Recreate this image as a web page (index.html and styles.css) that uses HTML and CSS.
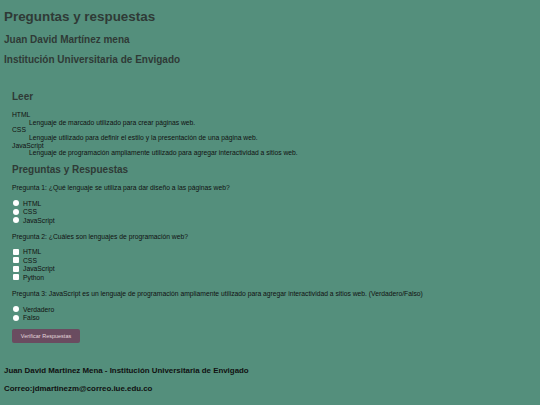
FILE: index.html
```html
<!DOCTYPE html>
<html lang="es">
<head>
<meta charset="utf-8">
<title>Preguntas y respuestas</title>
<link rel="stylesheet" href="styles.css">
</head>
<body>
<header class="top">
  <h1 class="title">Preguntas y respuestas</h1>
  <h2 class="sub">Juan David Martínez mena</h2>
  <h2 class="sub">Institución Universitaria de Envigado</h2>
</header>
<main class="content">
  <section class="read">
    <h3 class="sec">Leer</h3>
    <dl class="defs">
      <dt>HTML</dt>
      <dd>Lenguaje de marcado utilizado para crear páginas web.</dd>
      <dt>CSS</dt>
      <dd>Lenguaje utilizado para definir el estilo y la presentación de una página web.</dd>
      <dt>JavaScript</dt>
      <dd>Lenguaje de programación ampliamente utilizado para agregar interactividad a sitios web.</dd>
    </dl>
  </section>
  <section class="quiz">
    <h3 class="sec">Preguntas y Respuestas</h3>
    <p class="q">Pregunta 1: ¿Qué lenguaje se utiliza para dar diseño a las páginas web?</p>
    <div class="opts">
      <label class="opt"><input type="radio" name="p1" class="rad">HTML</label>
      <label class="opt"><input type="radio" name="p1" class="rad">CSS</label>
      <label class="opt"><input type="radio" name="p1" class="rad">JavaScript</label>
    </div>
    <p class="q">Pregunta 2: ¿Cuáles son lenguajes de programación web?</p>
    <div class="opts">
      <label class="opt"><input type="checkbox" class="chk">HTML</label>
      <label class="opt"><input type="checkbox" class="chk">CSS</label>
      <label class="opt"><input type="checkbox" class="chk">JavaScript</label>
      <label class="opt"><input type="checkbox" class="chk">Python</label>
    </div>
    <p class="q">Pregunta 3: JavaScript es un lenguaje de programación ampliamente utilizado para agregar interactividad a sitios web. (Verdadero/Falso)</p>
    <div class="opts last">
      <label class="opt"><input type="radio" name="p3" class="rad">Verdadero</label>
      <label class="opt"><input type="radio" name="p3" class="rad">Falso</label>
    </div>
    <button class="btn" type="button">Verificar Respuestas</button>
  </section>
</main>
<footer class="foot">
  <p class="fline">Juan David Martinez Mena - Institución Universitaria de Envigado</p>
  <p class="fline">Correo:jdmartinezm@correo.iue.edu.co</p>
</footer>
</body>
</html>
```
FILE: styles.css
```css
html, body {
  margin: 0;
  padding: 0;
}
body {
  background: #548f7c;
  font-family: "Liberation Sans", Arial, sans-serif;
  color: #111;
  padding: 8.5px 4px 0 4px;
}
.top {
  display: flex;
  flex-direction: column;
}
.title {
  font-size: 13.4px;
  line-height: 16px;
  margin: 0;
  color: #2f3a36;
}
.sub {
  font-size: 10px;
  line-height: 12px;
  margin: 8px 0 0 0;
  color: #2f3a36;
}
.title + .sub {
  margin-top: 9px;
}
.content {
  padding: 25.5px 8px 0 8px;
}
.sec {
  font-size: 10px;
  line-height: 12px;
  margin: 0 0 8px 0;
  color: #2f3a36;
}
.defs {
  margin: 0;
  font-size: 6.75px;
  line-height: 7.65px;
}
.defs dt,
.defs dd {
  line-height: 7.65px;
}
.defs dd {
  margin: 0 0 0 17px;
}
.quiz {
  margin-top: 7.3px;
}
.q {
  font-size: 6.75px;
  line-height: 7.7px;
  margin: 0 0 7px 0;
}
.opts {
  display: flex;
  flex-direction: column;
  margin-bottom: 8.5px;
}
.opts.last {
  margin-bottom: 7px;
}
.opt {
  display: flex;
  align-items: center;
  font-size: 6.75px;
  height: 8.5px;
  gap: 4px;
}
.rad, .chk {
  appearance: none;
  -webkit-appearance: none;
  width: 6px;
  height: 6px;
  margin: 0 0 0 1px;
  background: #fff;
  border: none;
}
.rad {
  border-radius: 50%;
}
.chk {
  border-radius: 1px;
}
.btn {
  display: block;
  width: 68px;
  height: 14px;
  padding: 0;
  margin: 0;
  background: #6a4c60;
  color: #e4d6dc;
  border: none;
  border-radius: 2px;
  font-family: "Liberation Sans", Arial, sans-serif;
  font-size: 5.5px;
}
.foot {
  padding-top: 22.7px;
}
.fline {
  font-size: 7.9px;
  font-weight: bold;
  line-height: 10px;
  margin: 0 0 8px 0;
  color: #111;
}
```
